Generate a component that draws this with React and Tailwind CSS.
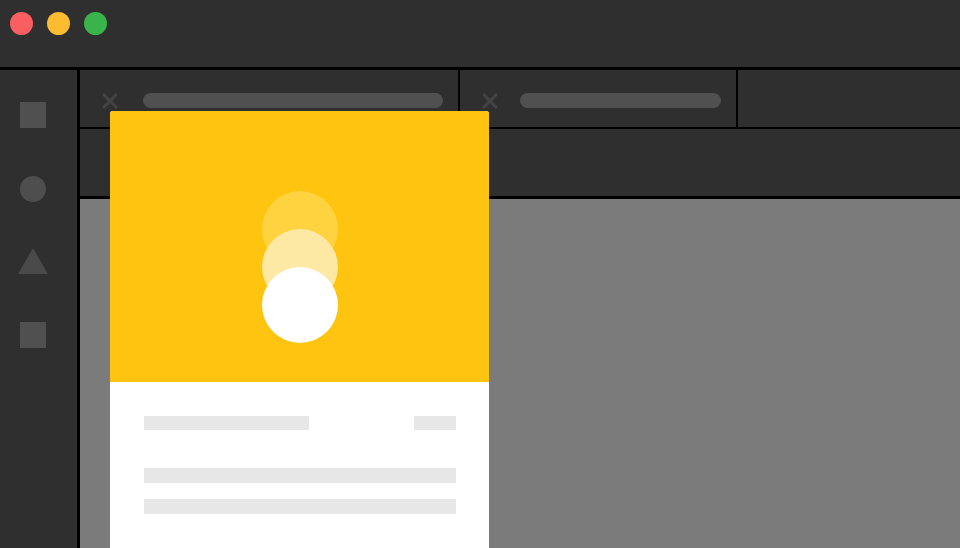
function CloseIcon() {
    return (
        <svg className="h-[16px] w-[16px] shrink-0" viewBox="0 0 16 16" aria-hidden="true">
            <path d="M1 1l14 14M15 1L1 15" stroke="#434343" strokeWidth="3" fill="none" />
        </svg>
    );
}

function Tab({ className, pillClass }) {
    return (
        <div className={`flex items-center border-r-2 border-black pt-[4px] ${className}`}>
            <CloseIcon />
            <div className={`h-[15px] rounded-full bg-[#505050] ${pillClass}`} />
        </div>
    );
}

export default function App() {
    return (
        <div className="relative flex h-[548px] w-[960px] flex-col overflow-hidden bg-[#2f2f2f]">
            {/* Title bar */}
            <div className="flex h-[70px] shrink-0 items-start gap-[14px] border-b-[3px] border-black pl-[10px] pt-[12px]">
                <div className="h-[23px] w-[23px] rounded-full bg-[#f95f62]" />
                <div className="h-[23px] w-[23px] rounded-full bg-[#fcbc30]" />
                <div className="h-[23px] w-[23px] rounded-full bg-[#38b44a]" />
            </div>

            <div className="flex min-h-0 flex-1">
                {/* Sidebar */}
                <div className="flex w-[80px] shrink-0 flex-col items-center border-r-[3px] border-black pr-[11px] pt-[32px]">
                    <div className="h-[26px] w-[26px] bg-[#505050]" />
                    <div className="mt-[48px] h-[26px] w-[26px] rounded-full bg-[#4e4e4e]" />
                    <svg className="mt-[46px] h-[26px] w-[30px]" viewBox="0 0 30 26" aria-hidden="true">
                        <path d="M15 0L30 26H0z" fill="#4a4a4a" />
                    </svg>
                    <div className="mt-[48px] h-[26px] w-[26px] bg-[#505050]" />
                </div>

                <div className="flex min-w-0 flex-1 flex-col">
                    {/* Tabs */}
                    <div className="flex h-[59px] shrink-0 border-b-2 border-black">
                        <Tab className="w-[380px] gap-[25px] pl-[22px]" pillClass="w-[300px]" />
                        <Tab className="w-[278px] gap-[22px] pl-[22px]" pillClass="w-[201px]" />
                    </div>
                    {/* Toolbar */}
                    <div className="h-[70px] shrink-0 border-b-[3px] border-black" />
                    {/* Canvas */}
                    <div className="flex-1 bg-[#7b7b7b]" />
                </div>
            </div>

            {/* Card over the window */}
            <div className="absolute left-[110px] top-[111px] w-[379px] overflow-hidden rounded-t-[3px] bg-white">
                <div className="flex h-[271px] flex-col items-center bg-[#fec40f] pt-[80px]">
                    <div className="h-[76px] w-[76px] rounded-full bg-[#ffd340]" />
                    <div className="-mt-[38px] h-[76px] w-[76px] rounded-full bg-[#fde9a4]" />
                    <div className="-mt-[38px] h-[76px] w-[76px] rounded-full bg-white" />
                </div>
                <div className="h-[166px] px-[34px] pr-[33px] pt-[34px]">
                    <div className="flex justify-between">
                        <div className="h-[14px] w-[165px] bg-[#e7e7e7]" />
                        <div className="h-[14px] w-[42px] bg-[#e7e7e7]" />
                    </div>
                    <div className="mt-[38px] h-[15px] bg-[#e7e7e7]" />
                    <div className="mt-[16px] h-[15px] bg-[#e7e7e7]" />
                </div>
            </div>
        </div>
    );
}
